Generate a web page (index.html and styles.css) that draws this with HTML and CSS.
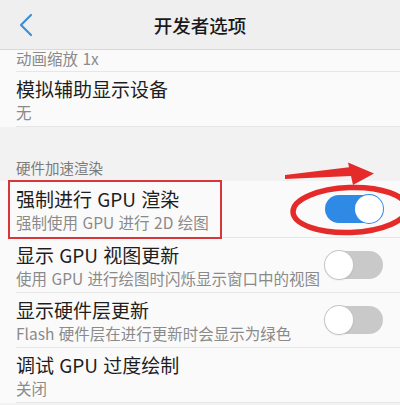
FILE: index.html
```html
<!DOCTYPE html>
<html lang="zh-CN">
<head>
    <meta charset="UTF-8">
    <meta name="viewport" content="width=device-width, initial-scale=1.0">
    <title>开发者选项</title>
    <link rel="stylesheet" href="styles.css">
</head>
<body>
    <div class="screen">
        <header class="top-bar">
            <svg class="back" width="14" height="24" viewBox="0 0 14 24">
                <path d="M12 2 L2 12 L12 22" fill="none" stroke="#3d8fd6" stroke-width="2.2" stroke-linecap="round" stroke-linejoin="round"/>
            </svg>
            <h1>开发者选项</h1>
        </header>

        <div class="list">
            <div class="row row-cut">
                <span class="sub">动画缩放 1x</span>
            </div>
            <div class="row">
                <div class="texts">
                    <div class="title">模拟辅助显示设备</div>
                    <div class="sub">无</div>
                </div>
            </div>
        </div>

        <div class="section-label">硬件加速渲染</div>

        <div class="list">
            <div class="row marked">
                <div class="texts">
                    <div class="title">强制进行 GPU 渲染</div>
                    <div class="sub">强制使用 GPU 进行 2D 绘图</div>
                </div>
                <span class="switch on"><span class="knob"></span></span>
                <div class="red-box"></div>
            </div>
            <div class="row">
                <div class="texts">
                    <div class="title">显示 GPU 视图更新</div>
                    <div class="sub">使用 GPU 进行绘图时闪烁显示窗口中的视图</div>
                </div>
                <span class="switch"><span class="knob"></span></span>
            </div>
            <div class="row">
                <div class="texts">
                    <div class="title">显示硬件层更新</div>
                    <div class="sub">Flash 硬件层在进行更新时会显示为绿色</div>
                </div>
                <span class="switch"><span class="knob"></span></span>
            </div>
            <div class="row">
                <div class="texts">
                    <div class="title">调试 GPU 过度绘制</div>
                    <div class="sub">关闭</div>
                </div>
            </div>
        </div>

        <!-- hand-drawn annotation over the screenshot -->
        <svg class="annotation" width="400" height="405" viewBox="0 0 400 405">
            <polygon points="285,175 351,167 351,176 285,179" fill="#e52a2a"/>
            <polygon points="348,162.5 374,173.5 353,185" fill="#e52a2a"/>
            <ellipse cx="350" cy="210" rx="57" ry="22.5" fill="none" stroke="#e52a2a" stroke-width="5.5" transform="rotate(-2 350 210)"/>
        </svg>
    </div>
</body>
</html>
```

FILE: styles.css
```css
body {
    margin: 0;
    font-family: "Noto Sans CJK SC", "Noto Sans", sans-serif;
    background-color: #f2f2f2;
    color: #1e1e1e;
}

.screen {
    position: relative;
    width: 400px;
    height: 405px;
    overflow: hidden;
    background-color: #f2f2f2;
}

.top-bar {
    position: relative;
    height: 49px;
    display: flex;
    align-items: center;
    justify-content: center;
    background-color: #efefef;
    border-bottom: 1px solid #d9d9d9;
}

.back {
    position: absolute;
    left: 19px;
    top: 13px;
}

.top-bar h1 {
    margin: 0;
    font-size: 18.5px;
    font-weight: 500;
    color: #1a1a1a;
}

.list {
    background-color: #fafafa;
}

.row {
    position: relative;
    display: flex;
    align-items: center;
    justify-content: space-between;
    height: 55px;
    margin-left: 16px;
    padding-right: 17px;
    border-bottom: 1px solid #e6e6e6;
    box-sizing: border-box;
}

.row-cut {
    height: 22px;
    align-items: flex-start;
}

.row-cut .sub {
    margin-top: -1px;
}

.texts {
    display: flex;
    flex-direction: column;
    gap: 3px;
}

.title {
    font-size: 19px;
    line-height: 22px;
    word-spacing: 1px;
    color: #1e1e1e;
}

.sub {
    font-size: 15.5px;
    line-height: 18px;
    word-spacing: 1px;
    color: #8a8a8a;
}

.section-label {
    height: 54px;
    box-sizing: border-box;
    padding: 32px 0 0 16px;
    font-size: 14.5px;
    line-height: 18px;
    color: #7a7a7a;
}

.marked {
    height: 57px;
}

.switch {
    position: relative;
    width: 58px;
    height: 28px;
    border-radius: 14px;
    background-color: #c9c9c9;
    flex-shrink: 0;
}

.switch .knob {
    position: absolute;
    top: 0;
    left: 0;
    width: 28px;
    height: 28px;
    border-radius: 50%;
    background-color: #ffffff;
    box-shadow: 0 0 0 1px #c4c4c4, 0 1px 2px rgba(0, 0, 0, 0.15);
    box-sizing: border-box;
}

.switch.on {
    background-color: #2f8ae6;
}

.switch.on .knob {
    left: 30px;
    box-shadow: 0 0 0 1px #2f8ae6;
}

.red-box {
    position: absolute;
    left: -8px;
    top: -1px;
    width: 214px;
    height: 59px;
    border: 2.5px solid #d9363b;
    box-sizing: border-box;
}

.annotation {
    position: absolute;
    left: 0;
    top: 0;
    pointer-events: none;
}
```
